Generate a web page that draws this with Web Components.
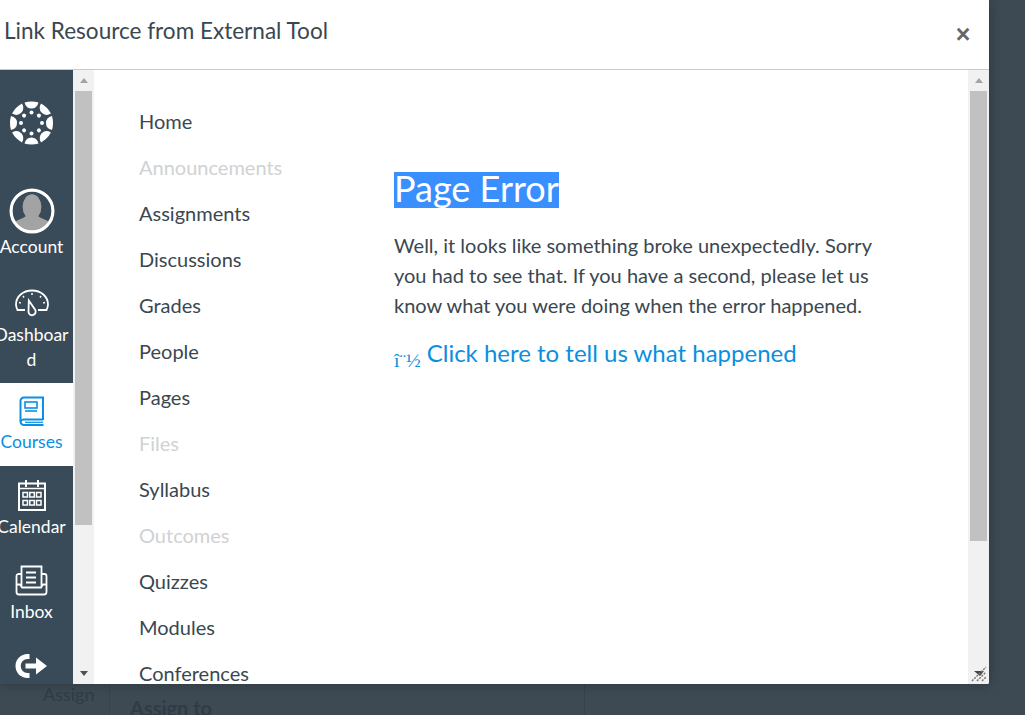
<!DOCTYPE html>
<html lang="en">
<head>
<meta charset="utf-8">
<title>Link Resource from External Tool</title>
<style>
html,body{margin:0;padding:0;height:100%;background:#3d4953;overflow:hidden;font-family:Lato,"Open Sans",sans-serif}
</style>
</head>
<body>
<template id="t-backdrop"><style>
:host{display:flex;height:715px;box-sizing:border-box;padding-top:683px;overflow:hidden;color:#2f3c47;background:#3d4953;font-size:18px}
.a{width:110px;box-sizing:border-box;padding:0 0 0 43px;line-height:22px;border-right:1px solid #36424c;height:32px}
.b{width:475px;box-sizing:border-box;padding:14px 0 0 20px;font-weight:700;font-size:20px;line-height:22px;border-right:1px solid #36424c;height:60px}
</style><div class="a">Assign</div><div class="b">Assign to</div></template>

<template id="t-dialog"><style>
:host{display:flex;flex-direction:column;position:absolute;left:0;top:0;width:989px;height:684px;background:#fff;box-shadow:0 0 12px rgba(0,0,0,.25);overflow:hidden;border-radius:0 0 2px 0}
header{flex:none;height:69px;border-bottom:1px solid #c8cbcd;display:flex;justify-content:space-between;position:relative}
h2{margin:0;padding:17px 0 0 4px;font-size:22.55px;line-height:28px;font-weight:400;color:#3a4751}
.x{position:absolute;left:955px;top:19px;width:16px;text-align:center;font:700 25px/30px "Liberation Sans",sans-serif;color:#666}
.body{flex:1;display:flex;min-height:0}
</style><header><h2>Link Resource from External Tool</h2><span class="x">×</span></header><div class="body"><slot></slot></div></template>

<template id="t-sidebar"><style>
:host{display:flex;flex-direction:column;flex:none;width:73px;background:#394b58;overflow:hidden;height:614px}
</style><slot></slot></template>

<template id="t-item"><style>
:host{display:flex;flex-direction:column;align-items:center;flex:none;box-sizing:border-box;width:73px;padding:var(--pad,13px) 10px 0 0;height:var(--h,85px);color:#fff;font-size:17.5px;line-height:25px;text-align:center;overflow:visible}
:host([active]){background:#fff;color:#0a8fe6}
.i{flex:none;height:var(--ih,32px);display:flex;justify-content:center;align-items:flex-start}
.l{white-space:nowrap;margin-top:var(--lm,0)}
</style><div class="i"><slot name="icon"></slot></div><div class="l"><slot></slot></div></template>

<template id="t-scroll"><style>
:host{display:flex;flex-direction:column;flex:none;position:relative;width:21px;height:614px;box-sizing:border-box;background:#f1f1f1}
.up{flex:none;height:21px;display:flex;align-items:center;justify-content:center}
.th{flex:none;margin:0 2px;height:var(--thumb,434px);background:#c1c1c1}
.dn{margin-top:auto;flex:none;height:21px;display:flex;align-items:center;justify-content:center}
i{display:block;width:0;height:0;border-left:4.5px solid transparent;border-right:4.5px solid transparent}
.up i{border-bottom:5px solid #a3a3a3}.dn i{border-top:5px solid #505050}
.grip{position:absolute;right:1px;bottom:1px}
:host([grip]) .dn i{display:none}
:host(:not([grip])) .grip{display:none}
</style><div class="up"><i></i></div><div class="th"></div><div class="dn"><i></i></div>
<svg class="grip" width="17" height="17" viewBox="0 0 17 17"><path d="M3 5H13L9 10Z" fill="#444"/><path d="M1 15 15 1M6 15 15 6M11 15 15 11" stroke="#777" stroke-width="1.5" stroke-dasharray="2 1.2" fill="none"/></svg></template>

<template id="t-nav"><style>
:host{display:flex;flex-direction:column;flex:none;width:300px;box-sizing:border-box;padding:28px 0 0 45px;color:#3a4751;font-size:20px;line-height:46px}
</style><slot></slot></template>

<template id="t-navlink"><style>
:host{display:block;white-space:nowrap}
:host([off]){color:#cfd2d4}
</style><slot></slot></template>

<template id="t-error"><style>
:host{display:block;flex:none;width:490px;padding-top:100px;color:#3a4751}
h1{margin:0 0 23px;font-size:36px;font-weight:400;line-height:37px;height:37px}
h1 span{display:inline-block;background:#3a8fff;color:#fff;line-height:33px;height:33px;padding-bottom:3px}
p{margin:0 0 15px;font-size:20px;line-height:30px}
a{display:block;color:#0a8fe0;text-decoration:none;font-size:24px;line-height:36px;white-space:nowrap}
a b{font:400 19.5px/1 "Liberation Serif",serif;vertical-align:-5px}
</style><h1><span>Page Error</span></h1>
<p>Well, it looks like something broke unexpectedly. Sorry you had to see that. If you have a second, please let us know what you were doing when the error happened.</p>
<a href="#"><b>î¨½</b> Click here to tell us what happened</a></template>

<template id="t-pane"><style>
:host{display:flex;flex:1;min-width:0;height:614px;overflow:hidden;background:#fff}
</style><slot></slot></template>

<lms-backdrop></lms-backdrop>
<lms-dialog>
  <lms-sidebar>
    <lms-item style="--pad:31px;--h:112px;--ih:44px">
      <svg slot="icon" width="44" height="44" viewBox="-21.5 -22 44 44" fill="#fff">
        <g id="logo"></g>
      </svg>
    </lms-item>
    <lms-item style="--pad:6px;--h:89px;--ih:46px">
      <svg slot="icon" width="46" height="46" viewBox="0 0 44 44">
        <defs><clipPath id="av"><circle cx="22" cy="22" r="19.5"/></clipPath></defs>
        <g clip-path="url(#av)" fill="#a3a3a3"><ellipse cx="22" cy="18" rx="9" ry="12"/><path d="M2 44V36C4 31 13 30 17 26H27C31 30 40 31 42 36V44Z"/></g>
        <circle cx="22" cy="22" r="20" fill="none" stroke="#fff" stroke-width="3"/>
      </svg>Account</lms-item>
    <lms-item style="--pad:17px;--h:112px;--ih:34px">
      <svg slot="icon" width="36" height="32" viewBox="0 0 36 32" fill="none" stroke="#fff" stroke-width="1.8">
        <path d="M11 22H3.500C2.500 20 2 18.500 2 16.500 2 8.500 9 2.500 18 2.500S34 8.500 34 16.500C34 18.500 33.500 20 32.500 22H24"/>
        <path d="M14.800 12.500 21 21.500A3.600 3.600 0 1 1 14.500 24Z"/>
        <path d="M18 5V7M9 8 10 9.500M27 8 26 9.500M5 14.500 6.800 15M31 14.500 29.200 15" stroke-width="1.500"/>
      </svg>Dashboar<br>d</lms-item>
    <lms-item active style="--pad:13px;--h:83px;--ih:33px">
      <svg slot="icon" width="26" height="31" viewBox="0 0 26 31" fill="none" stroke="#0a8fe6" stroke-width="2">
        <path d="M24 24V1.500H5A3.500 3.500 0 0 0 1.500 5V25.500A3.500 3.500 0 0 0 5 29H24.500"/>
        <path d="M1.500 25.500A3.500 3.500 0 0 1 5 23.500H24"/>
        <path d="M6 26.300H24" stroke-width="1.200"/>
        <rect x="6" y="6" width="12" height="6" stroke-width="1.600"/>
        <path d="M6 15H18" stroke-width="1.600"/>
      </svg>Courses</lms-item>
    <lms-item style="--pad:13px;--h:85px;--ih:35px">
      <svg slot="icon" width="28" height="32" viewBox="0 0 28 32" fill="none" stroke="#fff" stroke-width="2">
        <path d="M1 4.500H27V31H1Z"/>
        <path d="M1 9.500H27" stroke-width="1.500"/>
        <path d="M8 1V8M20 1V8" stroke-width="2"/>
        <g stroke-width="1.500"><rect x="5" y="13.500" width="4.500" height="4.500"/><rect x="11.800" y="13.500" width="4.500" height="4.500"/><rect x="18.500" y="13.500" width="4.500" height="4.500"/><rect x="5" y="21.500" width="4.500" height="4.500"/><rect x="11.800" y="21.500" width="4.500" height="4.500"/><rect x="18.500" y="21.500" width="4.500" height="4.500"/></g>
      </svg>Calendar</lms-item>
    <lms-item style="--pad:14px;--h:85px;--ih:34px">
      <svg slot="icon" width="33" height="31" viewBox="0 0 33 31" fill="none" stroke="#fff" stroke-width="1.800">
        <path d="M6.500 21V1.500H26.500V21"/>
        <path d="M11 7.500H21M11 12.500H21M11 17.500H21"/>
        <path d="M6.500 9H3A2 2 0 0 0 1.500 11V27A2.500 2.500 0 0 0 4 29.500H29A2.500 2.500 0 0 0 31.500 27V11A2 2 0 0 0 29.500 9H26.500"/>
        <path d="M1.500 19.500H5L7 22.500H26L28 19.500H31.500"/>
      </svg>Inbox</lms-item>
    <lms-item style="--pad:17px;--h:60px;--ih:26px">
      <svg slot="icon" width="33" height="26" viewBox="0.500 0 33 26" fill="#fff">
        <path d="M15 1H13C6.500 1 1 6 1 13S6.500 25 13 25H15V20H13C9.300 20 6.300 17 6.300 13S9.300 6 13 6H15Z"/>
        <path d="M11 10.500H21.500V4.500L32.500 13 21.500 21.500V15.500H11Z"/>
      </svg></lms-item>
  </lms-sidebar>
  <lms-scroll style="--thumb:434px"></lms-scroll>
  <lms-pane>
    <lms-nav>
      <lms-navlink>Home</lms-navlink>
      <lms-navlink off>Announcements</lms-navlink>
      <lms-navlink>Assignments</lms-navlink>
      <lms-navlink>Discussions</lms-navlink>
      <lms-navlink>Grades</lms-navlink>
      <lms-navlink>People</lms-navlink>
      <lms-navlink>Pages</lms-navlink>
      <lms-navlink off>Files</lms-navlink>
      <lms-navlink>Syllabus</lms-navlink>
      <lms-navlink off>Outcomes</lms-navlink>
      <lms-navlink>Quizzes</lms-navlink>
      <lms-navlink>Modules</lms-navlink>
      <lms-navlink>Conferences</lms-navlink>
    </lms-nav>
    <lms-error></lms-error>
  </lms-pane>
  <lms-scroll grip style="--thumb:450px"></lms-scroll>
</lms-dialog>
<script>
const reg=(name,id)=>customElements.define(name,class extends HTMLElement{
  constructor(){super();this.attachShadow({mode:'open'}).appendChild(document.getElementById(id).content.cloneNode(true));}
});
[['lms-backdrop','t-backdrop'],['lms-dialog','t-dialog'],['lms-sidebar','t-sidebar'],['lms-item','t-item'],['lms-scroll','t-scroll'],['lms-nav','t-nav'],['lms-navlink','t-navlink'],['lms-error','t-error'],['lms-pane','t-pane']].forEach(a=>reg(...a));
let s='';
for(let a=0;a<360;a+=45){
  s+=`<path transform="rotate(${a})" d="M-7 -20.500Q0 -22.500 7 -20.500Q5.500 -14.500 0 -14.500Q-5.500 -14.500 -7 -20.500Z"/><circle transform="rotate(${a})" cy="-10.500" r="2"/>`;
}
document.getElementById('logo').innerHTML=s;
</script>
</body>
</html>
